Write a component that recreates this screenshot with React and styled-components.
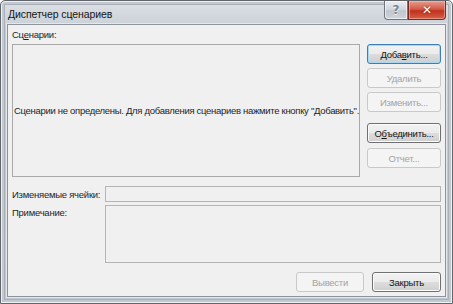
import React from 'react'
import styled, { createGlobalStyle } from 'styled-components'

const Global = createGlobalStyle`
  html, body {
    margin: 0;
    padding: 0;
    background: #ffffff;
  }
`

const Window = styled.div`
  box-sizing: border-box;
  width: 453px;
  height: 304px;
  display: flex;
  flex-direction: column;
  border: 1px solid #62666b;
  border-radius: 5px 5px 0 0;
  background: linear-gradient(#dde1e6, #c8cdd4 30px, #c0c6cd);
  box-shadow: inset 0 0 0 1px #eef1f4, inset 0 0 0 3px #c3c9d0, inset 0 0 0 4px #a9b0b8;
  font-family: "Liberation Sans", Arial, sans-serif;
  font-size: 9.5px;
  letter-spacing: -0.25px;
  color: #1e1e1e;
`

const TitleBar = styled.div`
  height: 25px;
  display: flex;
  align-items: flex-start;
  justify-content: space-between;
  padding-left: 7px;
`

const Title = styled.div`
  font-size: 10.5px;
  letter-spacing: -0.1px;
  line-height: 12px;
  margin-top: 7px;
  color: #151515;
`

const Controls = styled.div`
  display: flex;
  margin-right: 6px;
`

const CtrlButton = styled.div`
  height: 19px;
  width: ${p => (p.$close ? 38 : 24)}px;
  display: flex;
  align-items: center;
  justify-content: center;
  box-sizing: border-box;
  border: 1px solid ${p => (p.$close ? '#7b2a22' : '#6f757c')};
  border-top: none;
  border-radius: ${p => (p.$close ? '0 0 4px 0' : '0 0 0 4px')};
  background: ${p =>
    p.$close
      ? 'linear-gradient(#e79d8f, #d35a49 45%, #c1301d 55%, #d4604a)'
      : 'linear-gradient(#eceef1, #d3d8de 45%, #c0c6ce 55%, #d0d5db)'};
  box-shadow: inset 0 0 0 1px ${p => (p.$close ? 'rgba(255,200,190,0.5)' : 'rgba(255,255,255,0.6)')};
  color: ${p => (p.$close ? '#ffffff' : '#7d848c')};
  font-family: "DejaVu Sans", sans-serif;
  font-weight: bold;
  font-size: 12px;
  letter-spacing: 0;
  text-shadow: ${p => (p.$close ? '0 0 2px #7a1a10' : '0 1px 0 #ffffff')};
`

const Client = styled.div`
  flex: 1;
  margin: 0 6px 6px 6px;
  background: #f0f0f0;
  border: 1px solid #8d939a;
  box-shadow: 0 0 0 1px #e3e6ea;
  padding: 3px 4px 4px 4px;
  display: flex;
  flex-direction: column;
`

const Label = styled.div`
  line-height: 13px;
  height: 13px;
  white-space: nowrap;
`

const TopRow = styled.div`
  display: flex;
  gap: 7px;
  margin-top: 3px;
`

const ListBox = styled.div`
  width: 348px;
  height: 133px;
  box-sizing: border-box;
  border: 1px solid #a9a9a9;
  background: #f0f0f0;
  display: flex;
  align-items: center;
  white-space: nowrap;
  overflow: hidden;
  padding-left: 1px;
  letter-spacing: -0.3px;
`

const ButtonColumn = styled.div`
  display: flex;
  flex-direction: column;
`

const Button = styled.div`
  box-sizing: border-box;
  width: ${p => p.$w || 74}px;
  height: 20px;
  margin-top: ${p => p.$mt || 0}px;
  display: flex;
  align-items: center;
  justify-content: center;
  border-radius: 3px;
  border: 1px solid ${p => (p.$disabled ? '#c9c9c9' : p.$default ? '#3c7fb1' : '#707070')};
  background: ${p =>
    p.$disabled
      ? '#f4f4f4'
      : 'linear-gradient(#f2f2f2, #ebebeb 50%, #dddddd 50%, #cfcfcf)'};
  box-shadow: ${p =>
    p.$disabled ? 'none' : p.$default ? 'inset 0 0 0 1px #a6d8f3' : 'inset 0 0 0 1px #fcfcfc'};
  color: ${p => (p.$disabled ? '#a3a3a3' : '#141414')};
  white-space: nowrap;
`

const FieldRow = styled.div`
  display: flex;
  align-items: ${p => (p.$top ? 'flex-start' : 'center')};
  margin-top: ${p => p.$mt}px;
`

const FieldLabel = styled(Label)`
  width: 93px;
  margin-top: ${p => (p.$top ? 1 : 0)}px;
`

const Field = styled.div`
  box-sizing: border-box;
  flex: 1;
  height: ${p => p.$h}px;
  border: 1px solid #b4b4b4;
  background: #f0f0f0;
`

const Footer = styled.div`
  display: flex;
  justify-content: flex-end;
  gap: 8px;
  margin-top: 9px;
`

export default function App() {
  return (
    <>
      <Global />
      <Window>
        <TitleBar>
          <Title>Диспетчер сценариев</Title>
          <Controls>
            <CtrlButton>?</CtrlButton>
            <CtrlButton $close>✕</CtrlButton>
          </Controls>
        </TitleBar>
        <Client>
          <Label>Сц<u>е</u>нарии:</Label>
          <TopRow>
            <ListBox>
              Сценарии не определены. Для добавления сценариев нажмите кнопку "Добавить".
            </ListBox>
            <ButtonColumn>
              <Button $default>Доба<u>в</u>ить...</Button>
              <Button $disabled $mt={4}>Удалить</Button>
              <Button $disabled $mt={4}>Изменить...</Button>
              <Button $mt={11}>О<u>б</u>ъединить...</Button>
              <Button $disabled $mt={5}>Отчет...</Button>
            </ButtonColumn>
          </TopRow>
          <FieldRow $mt={9}>
            <FieldLabel>Изменяемые ячейки:</FieldLabel>
            <Field $h={16} />
          </FieldRow>
          <FieldRow $top $mt={3}>
            <FieldLabel $top>Примечание:</FieldLabel>
            <Field $h={58} />
          </FieldRow>
          <Footer>
            <Button $disabled $w={68}>Вывести</Button>
            <Button $w={69}>Закрыть</Button>
          </Footer>
        </Client>
      </Window>
    </>
  )
}
